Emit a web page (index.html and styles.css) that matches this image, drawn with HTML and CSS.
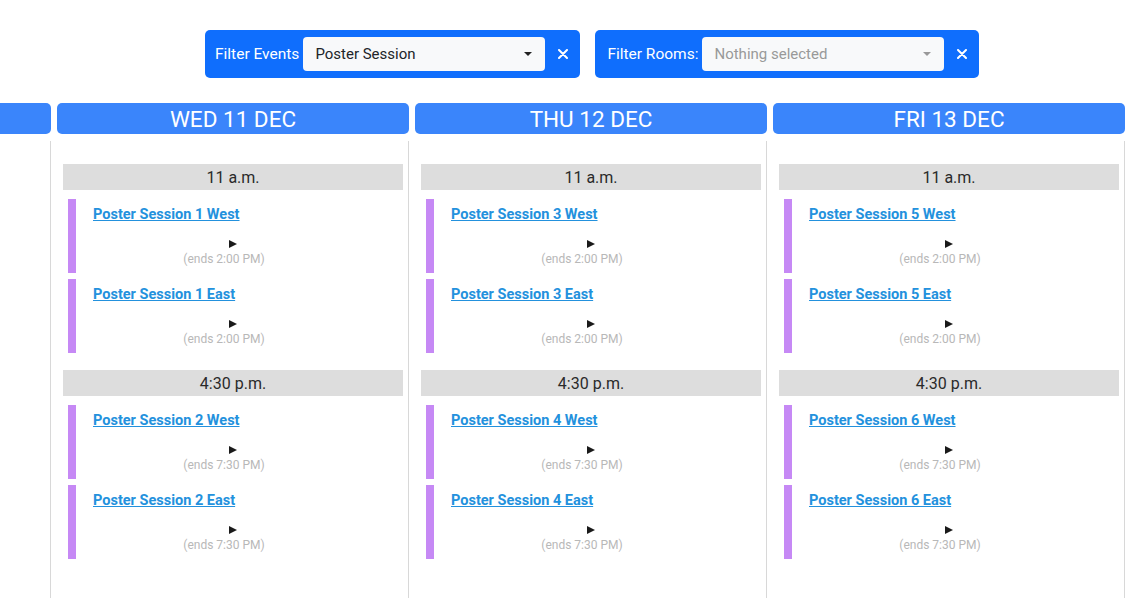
FILE: index.html
```html
<!DOCTYPE html>
<html>
<head>
<meta charset="utf-8">
<link rel="stylesheet" href="styles.css">
</head>
<body>
<div class="filters">
  <div class="filter">
    <span class="flabel">Filter Events</span>
    <div class="select"><span class="val">Poster Session</span><span class="caret"></span></div>
    <button class="close"><svg width="10" height="10" viewBox="0 0 10 10"><path d="M1 1L9 9M9 1L1 9" stroke="#fff" stroke-width="2" stroke-linecap="round"/></svg></button>
  </div>
  <div class="filter rooms">
    <span class="flabel">Filter Rooms:</span>
    <div class="select empty"><span class="val">Nothing selected</span><span class="caret"></span></div>
    <button class="close"><svg width="10" height="10" viewBox="0 0 10 10"><path d="M1 1L9 9M9 1L1 9" stroke="#fff" stroke-width="2" stroke-linecap="round"/></svg></button>
  </div>
</div>

<div class="days">
  <div class="day">
    <div class="dhead"></div>
    <div class="dbody"></div>
  </div>

  <div class="day">
    <div class="dhead">WED 11 DEC</div>
    <div class="dbody">
      <div class="slot">11 a.m.</div>
      <div class="event"><div class="ebar"></div><div class="einfo"><a class="etitle" href="#">Poster Session 1 West</a><div class="play"><span class="tri"></span></div><div class="ends">(ends 2:00 PM)</div></div></div>
      <div class="event"><div class="ebar"></div><div class="einfo"><a class="etitle" href="#">Poster Session 1 East</a><div class="play"><span class="tri"></span></div><div class="ends">(ends 2:00 PM)</div></div></div>
      <div class="slot">4:30 p.m.</div>
      <div class="event"><div class="ebar"></div><div class="einfo"><a class="etitle" href="#">Poster Session 2 West</a><div class="play"><span class="tri"></span></div><div class="ends">(ends 7:30 PM)</div></div></div>
      <div class="event"><div class="ebar"></div><div class="einfo"><a class="etitle" href="#">Poster Session 2 East</a><div class="play"><span class="tri"></span></div><div class="ends">(ends 7:30 PM)</div></div></div>
    </div>
  </div>

  <div class="day">
    <div class="dhead">THU 12 DEC</div>
    <div class="dbody">
      <div class="slot">11 a.m.</div>
      <div class="event"><div class="ebar"></div><div class="einfo"><a class="etitle" href="#">Poster Session 3 West</a><div class="play"><span class="tri"></span></div><div class="ends">(ends 2:00 PM)</div></div></div>
      <div class="event"><div class="ebar"></div><div class="einfo"><a class="etitle" href="#">Poster Session 3 East</a><div class="play"><span class="tri"></span></div><div class="ends">(ends 2:00 PM)</div></div></div>
      <div class="slot">4:30 p.m.</div>
      <div class="event"><div class="ebar"></div><div class="einfo"><a class="etitle" href="#">Poster Session 4 West</a><div class="play"><span class="tri"></span></div><div class="ends">(ends 7:30 PM)</div></div></div>
      <div class="event"><div class="ebar"></div><div class="einfo"><a class="etitle" href="#">Poster Session 4 East</a><div class="play"><span class="tri"></span></div><div class="ends">(ends 7:30 PM)</div></div></div>
    </div>
  </div>

  <div class="day">
    <div class="dhead">FRI 13 DEC</div>
    <div class="dbody">
      <div class="slot">11 a.m.</div>
      <div class="event"><div class="ebar"></div><div class="einfo"><a class="etitle" href="#">Poster Session 5 West</a><div class="play"><span class="tri"></span></div><div class="ends">(ends 2:00 PM)</div></div></div>
      <div class="event"><div class="ebar"></div><div class="einfo"><a class="etitle" href="#">Poster Session 5 East</a><div class="play"><span class="tri"></span></div><div class="ends">(ends 2:00 PM)</div></div></div>
      <div class="slot">4:30 p.m.</div>
      <div class="event"><div class="ebar"></div><div class="einfo"><a class="etitle" href="#">Poster Session 6 West</a><div class="play"><span class="tri"></span></div><div class="ends">(ends 7:30 PM)</div></div></div>
      <div class="event"><div class="ebar"></div><div class="einfo"><a class="etitle" href="#">Poster Session 6 East</a><div class="play"><span class="tri"></span></div><div class="ends">(ends 7:30 PM)</div></div></div>
    </div>
  </div>

  <div class="day">
    <div class="dhead"></div>
    <div class="dbody"></div>
  </div>
</div>
</body>
</html>
```

FILE: styles.css
```css
* { box-sizing: border-box; }
html, body { margin: 0; padding: 0; }
body {
  width: 1129px;
  height: 598px;
  overflow: hidden;
  background: #fff;
  font-family: Roboto, "Liberation Sans", sans-serif;
  color: #212529;
}
.filters {
  display: flex;
  gap: 15px;
  padding: 30px 0 0 205px;
  height: 103px;
}
.filter {
  display: flex;
  align-items: center;
  height: 48px;
  background: #0f6efd;
  border-radius: 5px;
  padding-left: 10px;
}
.filter.rooms { padding-left: 12px; }
.flabel {
  color: #fff;
  font-size: 15.5px;
  padding-right: 4px;
  white-space: nowrap;
}
.select {
  width: 242px;
  height: 34px;
  background: #f8f9fa;
  border-radius: 4px;
  display: flex;
  align-items: center;
  justify-content: space-between;
  padding: 0 12px 0 12px;
  font-size: 15px;
  color: #212529;
}
.select.empty .val { color: #999; }
.caret {
  width: 0; height: 0;
  border-left: 4px solid transparent;
  border-right: 4px solid transparent;
  border-top: 4px solid #222;
  margin-right: 1px;
}
.select.empty .caret { border-top-color: #999; }
.close {
  width: 35px;
  height: 48px;
  border: 0;
  background: transparent;
  padding: 0;
  display: flex;
  align-items: center;
  justify-content: center;
}
.days {
  display: flex;
  margin-left: -307px;
}
.day {
  flex: 0 0 358px;
  display: flex;
  flex-direction: column;
}
.dhead {
  margin-left: 6px;
  height: 31px;
  background: #3a85fb;
  border-radius: 5px;
  color: #fff;
  font-size: 22.5px;
  line-height: 31px;
  padding-top: 1px;
  text-align: center;
  margin-bottom: 7px;
}
.dbody {
  border-right: 1px solid #d8d8d8;
  height: 470px;
  padding: 23px 5px 0 12px;
}
.slot {
  height: 26px;
  background: #dddddd;
  text-align: center;
  font-size: 16px;
  line-height: 27px;
  color: #2a2a2a;
  margin-bottom: 9px;
}
.event {
  display: flex;
  height: 74px;
  margin: 0 0 6px 5px;
}
.event + .slot { margin-top: 17px; }
.ebar {
  width: 8px;
  background: #c689f5;
  flex: 0 0 8px;
}
.einfo {
  flex: 1;
  margin-right: 31px;
  padding-top: 6px;
}
.etitle {
  display: block;
  padding-left: 17px;
  font-size: 14.5px;
  font-weight: 700;
  line-height: 20px;
  color: #2391dd;
  text-decoration: underline;
}
.play {
  text-align: center;
  height: 16px;
  margin-top: 10px;
  line-height: 16px;
}
.tri {
  display: inline-block;
  width: 0; height: 0;
  margin-left: 18px;
  border-left: 8px solid #1a1a1a;
  border-top: 4.5px solid transparent;
  border-bottom: 4.5px solid transparent;
  vertical-align: middle;
}
.ends {
  text-align: center;
  font-size: 12px;
  line-height: 17px;
  color: #b8b8b8;
}
```
